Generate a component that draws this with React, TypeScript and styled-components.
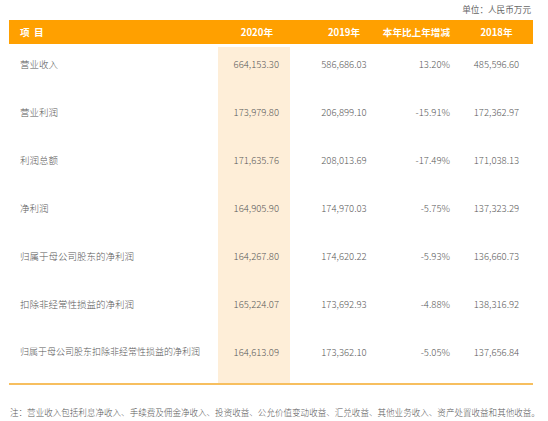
import React from "react";
import styled, { createGlobalStyle } from "styled-components";

const Global = createGlobalStyle`
  html, body { margin: 0; padding: 0; background: #ffffff; }
  body { font-family: "Noto Sans CJK SC", "Noto Sans", sans-serif; }
`;

const Page = styled.div`
  width: 548px;
  height: 421px;
  box-sizing: border-box;
  padding: 0 15px 0 9px;
  display: flex;
  flex-direction: column;
`;

const Unit = styled.div`
  height: 20px;
  display: flex;
  align-items: center;
  justify-content: flex-end;
  padding-right: 2px;
  padding-bottom: 2px;
  box-sizing: border-box;
  font-size: 8.6px;
  color: #666666;
`;

const Table = styled.div`
  display: grid;
  grid-template-columns: 209px 72px 108px 62px 73px;
  border-bottom: 2px solid #f7bf5f;
`;

const HeadCell = styled.div<{ $align: "left" | "right" | "center"; $pr?: number; $pl?: number }>`
  height: 24px;
  background: #ffa000;
  color: #ffffff;
  font-weight: 700;
  font-size: 9.6px;
  display: flex;
  align-items: center;
  justify-content: ${(p) => (p.$align === "left" ? "flex-start" : p.$align === "right" ? "flex-end" : "center")};
  padding-right: ${(p) => p.$pr ?? 0}px;
  padding-left: ${(p) => p.$pl ?? 0}px;
  margin-bottom: 3px;
  white-space: nowrap;
`;

const Cell = styled.div<{ $align: "left" | "right" | "center"; $pr?: number; $pl?: number; $hl?: boolean; $size?: number }>`
  height: 48px;
  box-sizing: border-box;
  padding-top: 10px;
  line-height: 14px;
  font-size: ${(p) => p.$size ?? 9.5}px;
  color: #595959;
  font-weight: 300;
  text-align: ${(p) => p.$align};
  padding-right: ${(p) => p.$pr ?? 0}px;
  padding-left: ${(p) => p.$pl ?? 0}px;
  background: ${(p) => (p.$hl ? "#feeed8" : "transparent")};
  white-space: nowrap;
`;

const Note = styled.div`
  margin-top: 21px;
  padding-left: 1px;
  font-size: 8.55px;
  color: #595959;
  font-weight: 300;
  white-space: nowrap;
`;

const rows: [string, string, string, string, string][] = [
  ["营业收入", "664,153.30", "586,686.03", "13.20%", "485,596.60"],
  ["营业利润", "173,979.80", "206,899.10", "-15.91%", "172,362.97"],
  ["利润总额", "171,635.76", "208,013.69", "-17.49%", "171,038.13"],
  ["净利润", "164,905.90", "174,970.03", "-5.75%", "137,323.29"],
  ["归属于母公司股东的净利润", "164,267.80", "174,620.22", "-5.93%", "136,660.73"],
  ["扣除非经常性损益的净利润", "165,224.07", "173,692.93", "-4.88%", "138,316.92"],
  ["归属于母公司股东扣除非经常性损益的净利润", "164,613.09", "173,362.10", "-5.05%", "137,656.84"],
];

export default function App() {
  return (
    <Page>
      <Global />
      <Unit>单位：人民币万元</Unit>
      <Table>
        <HeadCell $align="left" $pl={11}>项&nbsp;&nbsp;目</HeadCell>
        <HeadCell $align="right" $pr={17}>2020年</HeadCell>
        <HeadCell $align="center">2019年</HeadCell>
        <HeadCell $align="right" $pr={10}>本年比上年增减</HeadCell>
        <HeadCell $align="center">2018年</HeadCell>
        {rows.map((r) => (
          <React.Fragment key={r[0]}>
            <Cell $align="left" $pl={11} $size={r[0].length > 15 ? 9 : 9.5}>{r[0]}</Cell>
            <Cell $align="right" $pr={11} $hl>{r[1]}</Cell>
            <Cell $align="center">{r[2]}</Cell>
            <Cell $align="right" $pr={10}>{r[3]}</Cell>
            <Cell $align="center">{r[4]}</Cell>
          </React.Fragment>
        ))}
      </Table>
      <Note>注：营业收入包括利息净收入、手续费及佣金净收入、投资收益、公允价值变动收益、汇兑收益、其他业务收入、资产处置收益和其他收益。</Note>
    </Page>
  );
}
